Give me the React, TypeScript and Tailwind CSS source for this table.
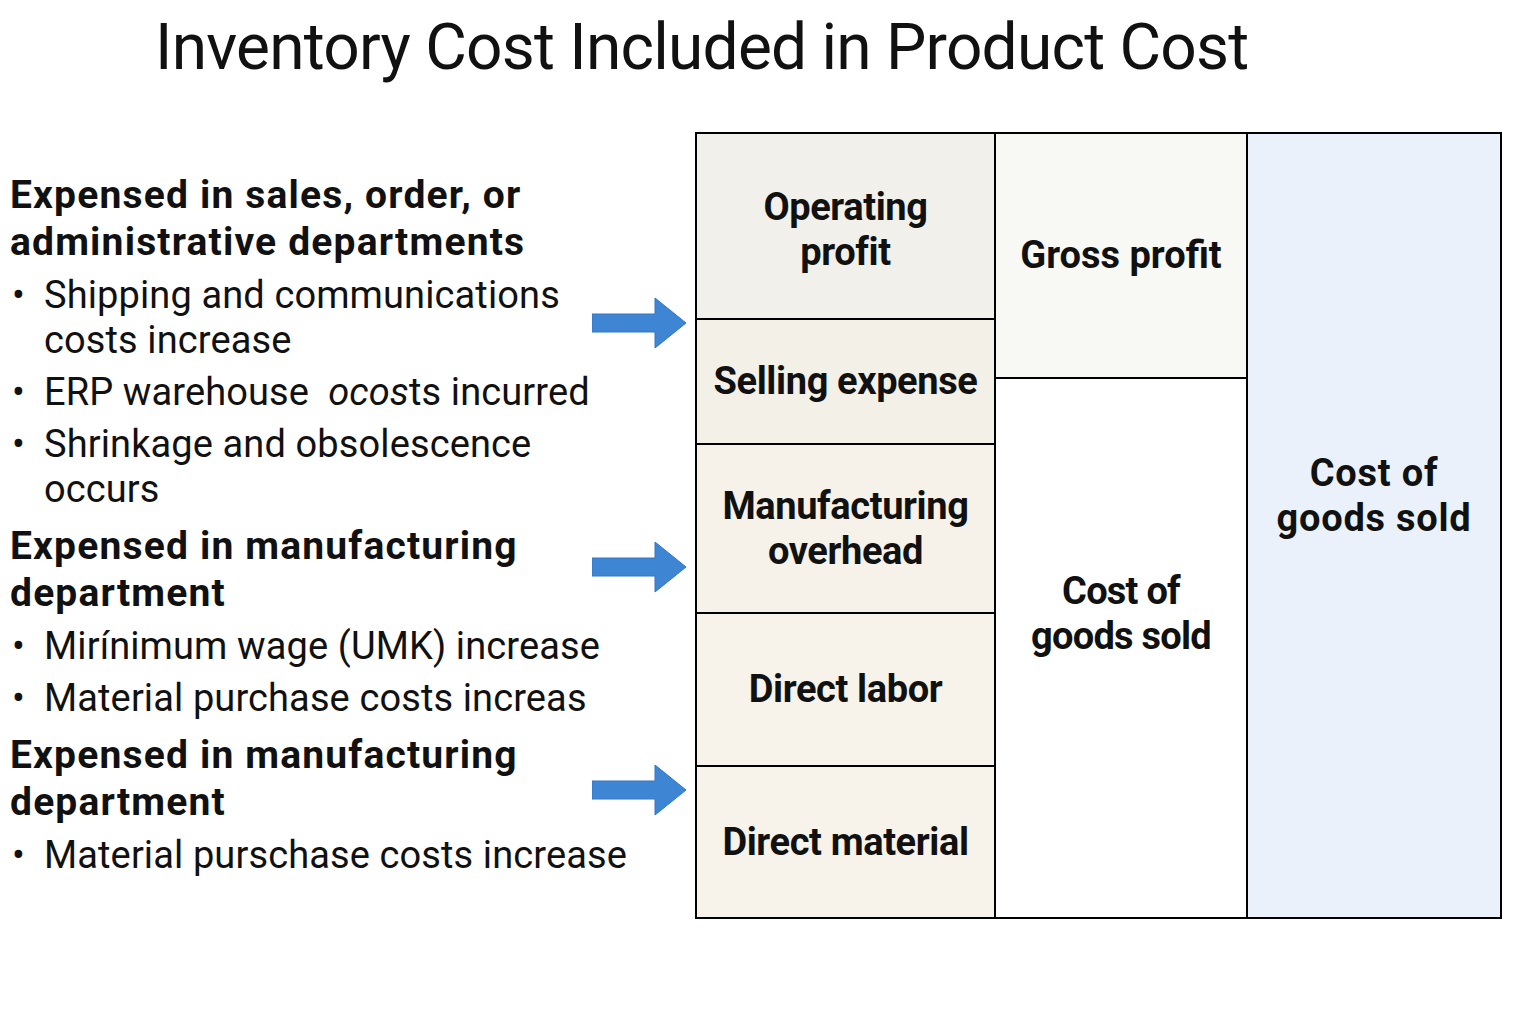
const Arrow = () => (
  <svg width="95" height="52" viewBox="0 0 95 52">
    <path d="M0 17 H63 V1 L94 26 L63 51 V35 H0 Z" fill="#3e86d3" stroke="#3276c4" strokeWidth="1" />
  </svg>
)

const Bullet = ({ children }: { children: React.ReactNode }) => (
  <div className="flex mt-[7px]">
    <span className="w-[34px] pl-[2px] shrink-0">•</span>
    <div>{children}</div>
  </div>
)

const Heading = ({ lines }: { lines: string[] }) => (
  <div className="font-bold text-[39px] leading-[47px] tracking-[0.03em] mt-[11px]">
    {lines.map((l, i) => (
      <div key={i}>{l}</div>
    ))}
  </div>
)

const Cell = ({ h, bg, children }: { h: string; bg: string; children: React.ReactNode }) => (
  <div className={`${h} ${bg} flex items-center justify-center text-center border-b-[2.5px] border-black last:border-b-0`}>
    {children}
  </div>
)

export default function App() {
  return (
    <div className="w-[1536px] h-[1024px] bg-white text-[#111] font-['Roboto',sans-serif] overflow-hidden">
      <h1 className="pl-[155px] pt-[12px] h-[132px] text-[64px] leading-[72px] font-normal tracking-[-0.012em]">
        Inventory Cost Included in Product Cost
      </h1>
      <div className="flex">
        <div className="w-[592px] pl-[10px] pt-[29px] text-[38px] leading-[45px] tracking-[0.003em] whitespace-nowrap">
          <Heading lines={['Expensed in sales, order, or', 'administrative departments']} />
          <Bullet>
            <div>Shipping and communications</div>
            <div>costs increase</div>
          </Bullet>
          <Bullet>
            ERP warehouse&nbsp; <span className="italic">ocos</span>ts incurred
          </Bullet>
          <Bullet>
            <div>Shrinkage and obsolescence</div>
            <div>occurs</div>
          </Bullet>
          <Heading lines={['Expensed in manufacturing', 'department']} />
          <Bullet>Mirínimum wage (UMK) increase</Bullet>
          <Bullet>Material purchase costs increas</Bullet>
          <Heading lines={['Expensed in manufacturing', 'department']} />
          <Bullet>Material purschase costs increase</Bullet>
        </div>
        <div className="w-[103px] flex flex-col">
          <div className="mt-[165px]"><Arrow /></div>
          <div className="mt-[192px]"><Arrow /></div>
          <div className="mt-[171px]"><Arrow /></div>
        </div>
        <div className="w-[807px] h-[787px] border-[2.5px] border-black flex font-bold text-[38px] leading-[45px] tracking-[-0.01em]">
          <div className="w-[299px] flex flex-col border-r-[2.5px] border-black">
            <Cell h="h-[186px]" bg="bg-[#f2f0ea]">
              <div className="pt-[8px]">Operating<br />profit</div>
            </Cell>
            <Cell h="h-[125px]" bg="bg-[#f3f0e8]">
              <div className="whitespace-nowrap">Selling expense</div>
            </Cell>
            <Cell h="h-[169px]" bg="bg-[#f6f2e9]">
              <div>Manufacturing<br />overhead</div>
            </Cell>
            <Cell h="h-[153px]" bg="bg-[#f7f3ea]">
              <div>Direct labor</div>
            </Cell>
            <Cell h="flex-1" bg="bg-[#f7f3ea]">
              <div>Direct material</div>
            </Cell>
          </div>
          <div className="w-[252px] flex flex-col border-r-[2.5px] border-black">
            <div className="h-[245px] bg-[#f8f8f5] flex items-center justify-center border-b-[2.5px] border-black tracking-normal">
              Gross profit
            </div>
            <div className="flex-1 bg-white flex items-center justify-center text-center pb-[68px] tracking-[-0.02em]">
              <div>Cost of<br />goods sold</div>
            </div>
          </div>
          <div className="flex-1 bg-[#eaf1fb] flex items-center justify-center text-center pb-[60px] tracking-[0.02em]">
            <div>Cost of<br />goods sold</div>
          </div>
        </div>
      </div>
    </div>
  )
}
